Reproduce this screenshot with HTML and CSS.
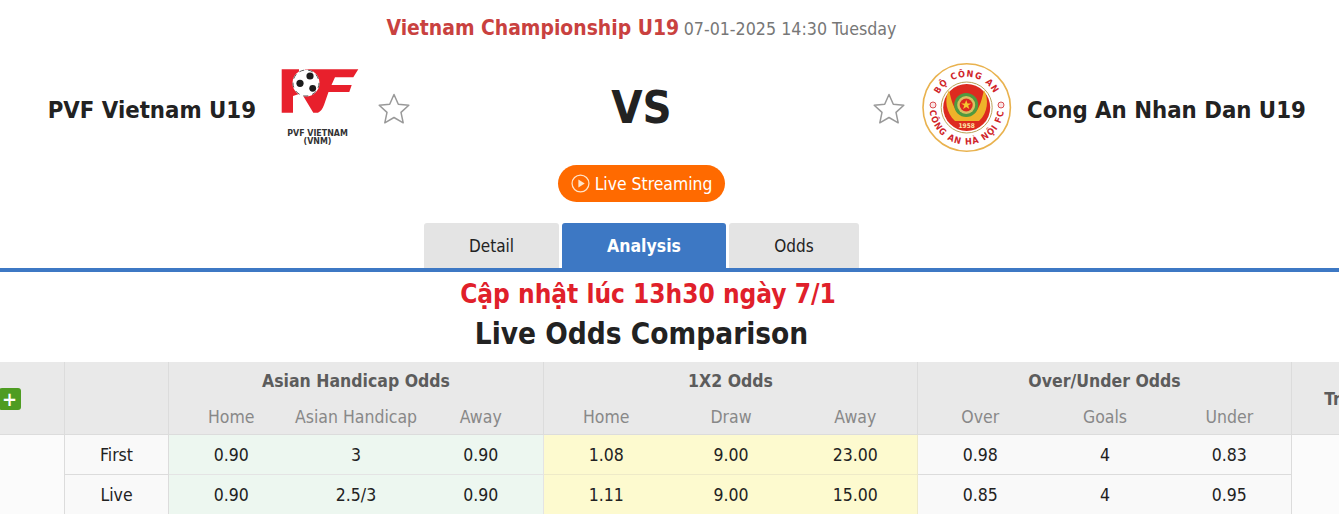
FILE: index.html
```html
<!DOCTYPE html>
<html lang="en">
<head>
<meta charset="utf-8">
<title>PVF Vietnam U19 vs Cong An Nhan Dan U19</title>
<link rel="stylesheet" href="styles.css">
</head>
<body>
<header class="match">
  <p class="league"><span class="league-name">Vietnam Championship U19</span> <span class="league-date">07-01-2025 14:30 Tuesday</span></p>
  <div class="teams">
    <div class="team team-home">
      <span class="team-name">PVF Vietnam U19</span>
      <svg class="logo logo-pvf" viewBox="0 0 90 90" aria-label="PVF Vietnam logo">
        <path class="pvf-red" d="M6.700 6.300H24V31L18 33V49.700H6.700Z"/>
        <path class="pvf-red" d="M30 6.300H83.300L78.300 14.300H60L56.500 22H76.700L74.300 29H53.500L49 42C47.500 46 45.500 48.500 43 49.700H38.300L27 31Z"/>
        <circle class="ball" cx="31" cy="20" r="13.500"/>
        <circle class="ball-dot" cx="35" cy="13" r="3.600"/>
        <circle class="ball-dot" cx="25" cy="20.300" r="3.600"/>
        <circle class="ball-dot" cx="37.700" cy="25.300" r="3.400"/>
        <circle class="ball-edge" cx="31" cy="20" r="13"/>
        <text class="pvf-text" x="42.500" y="73">PVF VIETNAM</text>
        <text class="pvf-text" x="42.500" y="81">(VNM)</text>
      </svg>
      <svg class="star" viewBox="0 0 32 32" aria-hidden="true"><path d="M16 1.500 20.300 11.200 30.800 12.300 23 19.400 25.200 29.800 16 24.500 6.800 29.800 9 19.400 1.200 12.300 11.700 11.200Z"/></svg>
    </div>
    <div class="versus">VS</div>
    <div class="team team-away">
      <svg class="star" viewBox="0 0 32 32" aria-hidden="true"><path d="M16 1.500 20.300 11.200 30.800 12.300 23 19.400 25.200 29.800 16 24.500 6.800 29.800 9 19.400 1.200 12.300 11.700 11.200Z"/></svg>
      <svg class="logo logo-can" viewBox="0 0 90 90" aria-label="Cong An Ha Noi FC logo">
        <defs>
          <path id="arc-top" d="M14 44.500A30.700 30.700 0 0 1 75.400 44.500"/>
          <path id="arc-bottom" d="M7.500 44.500A37.200 37.200 0 0 0 81.900 44.500"/>
        </defs>
        <circle class="can-ring" cx="44.700" cy="44.500" r="43.700"/>
        <text class="can-text"><textPath href="#arc-top" startOffset="50%">BỘ CÔNG AN</textPath></text>
        <text class="can-text"><textPath href="#arc-bottom" startOffset="50%">CÔNG AN HÀ NỘI FC</textPath></text>
        <circle class="can-rosette" cx="11" cy="42" r="3"/>
        <circle class="can-rosette" cx="79" cy="42" r="3"/>
        <circle class="can-inner-ring" cx="44.700" cy="44.500" r="25.500"/>
        <circle class="can-red" cx="44.700" cy="44.500" r="23.500"/>
        <path class="can-gold" d="M27 27C22 36 24 50 33 58H57C66 50 67 36 62 27 60 36 58 44 53 50H36C31 44 29 36 27 27Z"/>
        <circle class="can-green" cx="44.200" cy="42" r="12"/>
        <circle class="can-wreath" cx="44.200" cy="42" r="9"/>
        <circle class="can-red" cx="44.200" cy="42" r="6.500"/>
        <path class="can-star" d="M44.200 37 45.500 40.400H49.200L46.200 42.500 47.300 46 44.200 43.900 41.100 46 42.200 42.500 39.200 40.400H42.900Z"/>
        <text class="can-year" x="44.700" y="65">1958</text>
      </svg>
      <span class="team-name">Cong An Nhan Dan U19</span>
    </div>
  </div>
  <a class="live" href="#">
    <svg class="live-icon" viewBox="0 0 18 18" aria-hidden="true"><circle cx="9" cy="9" r="8"/><path d="M7 5.200 13 9 7 12.800Z"/></svg>
    <span>Live Streaming</span>
  </a>
  <nav class="tabs">
    <a class="tab tab-detail" href="#">Detail</a>
    <a class="tab tab-analysis" href="#">Analysis</a>
    <a class="tab tab-odds" href="#">Odds</a>
  </nav>
</header>
<main>
  <h2 class="update">Cập nhật lúc 13h30 ngày 7/1</h2>
  <h1 class="section-title">Live Odds Comparison</h1>
  <div class="table-clip">
    <table class="odds">
      <colgroup>
        <col class="c-add"><col class="c-label">
        <col class="c-wide"><col class="c-wide"><col class="c-wide">
        <col class="c-wide"><col class="c-wide"><col class="c-narrow">
        <col class="c-wide"><col class="c-wide"><col class="c-narrow">
        <col class="c-trend">
      </colgroup>
      <thead>
        <tr class="head-top">
          <th rowspan="2"><span class="add">+</span></th>
          <th rowspan="2"></th>
          <th colspan="3">Asian Handicap Odds</th>
          <th colspan="3">1X2 Odds</th>
          <th colspan="3">Over/Under Odds</th>
          <th rowspan="2">Trend</th>
        </tr>
        <tr class="head-sub">
          <td>Home</td><td>Asian Handicap</td><td>Away</td>
          <td>Home</td><td>Draw</td><td>Away</td>
          <td>Over</td><td>Goals</td><td>Under</td>
        </tr>
      </thead>
      <tbody>
        <tr>
          <td class="blank" rowspan="2"></td>
          <td class="label">First</td>
          <td class="green">0.90</td><td class="green">3</td><td class="green end">0.90</td>
          <td class="yellow">1.08</td><td class="yellow">9.00</td><td class="yellow end">23.00</td>
          <td>0.98</td><td>4</td><td class="end">0.83</td>
          <td class="blank" rowspan="2"></td>
        </tr>
        <tr>
          <td class="label">Live</td>
          <td class="green">0.90</td><td class="green">2.5/3</td><td class="green end">0.90</td>
          <td class="yellow">1.11</td><td class="yellow">9.00</td><td class="yellow end">15.00</td>
          <td>0.85</td><td>4</td><td class="end">0.95</td>
        </tr>
      </tbody>
    </table>
  </div>
</main>
</body>
</html>
```
FILE: styles.css
```css
* { box-sizing: border-box; }
html, body { margin: 0; height: 514px; overflow: hidden; background: #fff; }
body { font-family: "DejaVu Sans Condensed", "DejaVu Sans", sans-serif; font-stretch: condensed; color: #222; }

.match { width: 1283px; display: flex; flex-direction: column; align-items: center; }
.league { margin: 0; height: 56px; padding-top: 14px; line-height: 28px; white-space: nowrap; }
.league-name { font-size: 20.900px; font-weight: 700; color: #c9413f; }
.league-date { font-size: 17.700px; color: #777; }

.teams { width: 1283px; height: 104px; display: grid; grid-template-columns: 1fr 463px 1fr; align-items: center; }
.team { display: flex; align-items: center; min-width: 0; }
.team-home { justify-content: flex-end; }
.team-name { font-size: 23.700px; font-weight: 700; color: #222; white-space: nowrap; padding-top: 4px; }
.logo { width: 90px; height: 90px; flex: none; }
.team-home .logo { margin: 0 13px 0 19px; }
.team-away .logo { margin: 0 15px 0 17px; }
.star { width: 32px; height: 32px; flex: none; margin-top: 1px; }
.star path { fill: #fff; stroke: #999; stroke-width: 1.500; stroke-linejoin: round; }
.versus { font-size: 45px; font-weight: 700; text-align: center; color: #222; line-height: 1; padding-bottom: 2px; }

.pvf-red { fill: #e8202c; }
.ball { fill: #fff; }
.ball-dot { fill: #1c1c1c; }
.ball-edge { fill: none; stroke: #333; stroke-width: .8; stroke-dasharray: 5 4; }
.pvf-text { font-size: 8.800px; font-weight: 700; fill: #333; text-anchor: middle; }

.can-ring { fill: #fff; stroke: #e9b24e; stroke-width: 1.600; }
.can-text { font-size: 9px; font-weight: 700; fill: #d0242a; text-anchor: middle; letter-spacing: 1.100px; }
.can-rosette { fill: #f9e4e4; stroke: #d0242a; stroke-width: .8; }
.can-inner-ring { fill: #fff; stroke: #b9a258; stroke-width: 1; }
.can-red { fill: #dd2a1f; }
.can-gold { fill: #eeb32a; }
.can-green { fill: #4f9a3f; }
.can-wreath { fill: #d9c060; }
.can-star { fill: #f4c92f; }
.can-year { font-size: 6.500px; font-weight: 700; fill: #ffe6a8; text-anchor: middle; }

.live { margin-top: 5px; width: 167px; height: 37px; border-radius: 19px; background: #ff6a00; color: #fff; font-size: 17.400px; text-decoration: none; display: flex; align-items: center; justify-content: center; gap: 5px; }
.live-icon { width: 19px; height: 19px; flex: none; }
.live-icon circle { fill: none; stroke: #ffe3c8; stroke-width: 1.200; }
.live-icon path { fill: #ffe3c8; }

.tabs { display: flex; gap: 3px; margin-top: 21px; height: 45px; }
.tab { display: flex; align-items: center; justify-content: center; background: #e4e4e4; color: #222; font-size: 17px; text-decoration: none; border-radius: 3px 3px 0 0; }
.tab-detail { width: 135px; }
.tab-analysis { width: 164px; background: #3d78c4; color: #fff; font-weight: 700; font-size: 17.500px; }
.tab-odds { width: 130px; }

main { border-top: 4px solid #3d78c4; }
.update { margin: 0; padding-left: 13px; width: 1283px; height: 42px; line-height: 44px; text-align: center; font-size: 26px; font-weight: 700; color: #e0202a; }
.section-title { margin: 0; width: 1283px; height: 48px; line-height: 40px; text-align: center; font-size: 29.500px; font-weight: 700; color: #222; }

.table-clip { overflow: hidden; }
.odds { margin-left: -46px; width: 1452px; table-layout: fixed; border-collapse: collapse; font-size: 17.500px; text-align: center; }
.c-add { width: 110px; }
.c-label { width: 104px; }
.c-wide { width: 125px; }
.c-narrow { width: 124px; }
.c-trend { width: 115px; }
.odds th, .odds td { padding: 0; border: 1px solid #dcdcdc; font-weight: 400; }
.odds thead th, .odds thead td { background: #e9e9e9; }
.odds th { font-weight: 700; color: #5c5c5c; padding-top: 2px; }
.head-top { height: 36px; }
.head-sub { height: 36px; }
.head-sub td { color: #888; border-left: 0; border-right: 0; border-top: 0; padding-top: 2px; }
.head-sub td:nth-child(3n) { border-right: 1px solid #dcdcdc; }
.head-top th { border-top: 0; }
.head-top th[colspan] { border-bottom: 0; }
.odds tbody tr { height: 40px; }
.odds tbody td { background: #f9f9f9; border-left: 0; border-right: 0; color: #222; padding-top: 2px; }
.odds tbody .label { border-left: 1px solid #dcdcdc; border-right: 1px solid #dcdcdc; }
.odds tbody .end { border-right: 1px solid #dcdcdc; }
.odds tbody .green { background: #edf7f0; border-color: #e4e4e4; border-left: 0; }
.odds tbody .yellow { background: #fdfacf; border-color: #eeeac8; border-left: 0; }
.odds tbody .blank { background: #fbfbfb; }
.add { display: inline-block; width: 22px; height: 22px; background: #4e9c22; color: #fff; border-radius: 3px; font-size: 20px; line-height: 22px; font-weight: 700; vertical-align: middle; }
```
